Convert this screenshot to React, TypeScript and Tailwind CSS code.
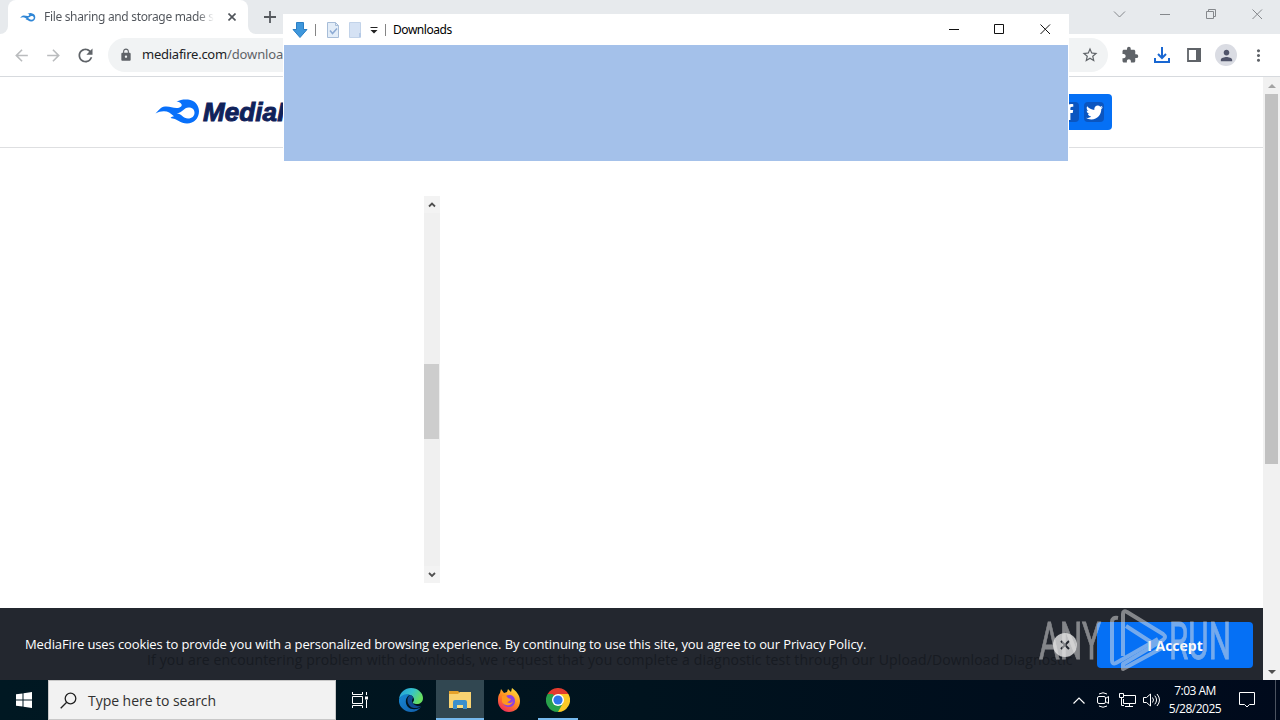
import type { ReactNode } from 'react'
import { FaTwitter, FaFacebookF } from 'react-icons/fa'
import {
  MdArrowBack,
  MdArrowForward,
  MdExtension,
  MdLock,
  MdPerson,
  MdRefresh,
  MdStarBorder,
  MdMoreVert,
} from 'react-icons/md'

function Flame({ className }: { className: string }) {
  return (
    <svg viewBox="0 0 46 26" className={className} fill="currentColor">
      <path
        fillRule="evenodd"
        d="M.5 14.500C4 11 5.500 8 10 7.500c5-.7 9 2.500 14 1.200 3-.8 3.500-3 1.500-4.700-1-.9-2.500-1.300-4-1.200C25 .6 29 .2 33 .5c6.500.6 11 5.500 11 11.800 0 7-5 12.200-12 12.200-6.500 0-10-5-16.500-5.500 1-1 2-1.400 3.500-1.700-3.500-3.300-6-5-10-5.100-3-.1-5.500.7-8.500 2.300zM21.500 14.500c4.500-.5 6.500 5 11.500 5 4 0 6.500-2.500 6.500-5.800S37 8.500 33.500 8.500c-4.500 0-6 5-12 6z"
      />
    </svg>
  )
}

function TabStrip() {
  return (
    <div className="flex h-[34px] bg-[#e7eaed]">
      <div className="flex w-2 bg-white">
        <div className="w-2 rounded-br-lg bg-[#e7eaed]" />
      </div>
      <div className="flex w-60 items-center rounded-t-lg bg-white pl-3">
        <Flame className="h-[13px] w-4 text-[#2f86d6]" />
        <div className="ml-2 w-[170px] overflow-hidden whitespace-nowrap bg-gradient-to-r from-[#50545a] from-90% to-white bg-clip-text text-[12px] leading-4 tracking-[-0.33px] text-transparent">
          File sharing and storage made simple
        </div>
        <svg viewBox="0 0 8 8" className="ml-[14px] size-2 text-[#50545a]" stroke="currentColor" strokeWidth="1.6">
          <path d="M.5.5l7 7M7.5.5l-7 7" />
        </svg>
      </div>
      <div className="flex w-2 bg-white">
        <div className="w-2 rounded-bl-lg bg-[#e7eaed]" />
      </div>
      <svg viewBox="0 0 12 12" className="mt-[11px] ml-2 size-3" stroke="#55595e" strokeWidth="1.8">
        <path d="M6 0v12M0 6h12" />
      </svg>
      <svg viewBox="0 0 160 20" className="mt-[4px] mr-[10px] ml-auto h-5 w-40" fill="none" stroke="#85888c">
        <path d="M4 7.500l5.500 5.500L15 7.500M50 10.500h10M96.500 7.500h7v7h-7zM98.500 7.500v-2h7v7h-2M142.500 5.500l9.500 9.500M152 5.500l-9.500 9.500" />
      </svg>
    </div>
  )
}

function Toolbar() {
  return (
    <div className="flex h-[43px] items-center border-b border-[#d7dade] bg-white text-[#5f6368]">
      <MdArrowBack className="ml-3 size-[19px] text-[#babcbe]" />
      <MdArrowForward className="ml-[13px] size-[19px] text-[#babcbe]" />
      <MdRefresh className="ml-[12px] size-[21px]" />
      <div className="ml-[12px] flex h-[34px] w-[1000px] items-center rounded-full bg-[#f1f3f4] pl-[11px]">
        <MdLock className="size-[14px]" />
        <div className="ml-[9px] text-[13px] tracking-[-0.100px]">
          <span className="tracking-[-0.250px] text-[#202124]">mediafire.com</span>/download_repair.php
        </div>
        <MdStarBorder className="mr-[9px] ml-auto size-[18px]" />
      </div>
      <MdExtension className="ml-[13px] size-[18px]" />
      <svg viewBox="0 0 16 16" className="ml-[15px] size-4" fill="none" stroke="#1967d2" strokeWidth="2">
        <path d="M8 0v11M4 7l4 4 4-4M1 11v4h14v-4" />
      </svg>
      <svg viewBox="0 0 14 14" className="ml-[17px] size-[14px]">
        <path d="M1 1h12v12H1z" fill="none" stroke="currentColor" strokeWidth="1.800" />
        <path d="M9 0h5v14H9z" fill="currentColor" />
      </svg>
      <div className="ml-[14px] flex size-[22px] items-center justify-center rounded-full bg-[#dadce3]">
        <MdPerson className="size-[17px] text-[#50546a]" />
      </div>
      <MdMoreVert className="ml-[12px] size-[19px]" />
    </div>
  )
}

function SiteHeader() {
  return (
    <header className="flex h-[71px] items-center border-b border-[#dedfe1] pr-[151px] pl-[155px]">
      <Flame className="h-[26px] w-[46px] text-[#0870fa]" />
      <div className="ml-[2px] font-['Liberation_Sans'] text-[26px] font-bold tracking-[0.100px] text-[#10225a] italic [-webkit-text-stroke:1px_#10225a]">
        MediaFire
      </div>
      <div className="ml-auto flex h-9 w-40 items-center justify-end gap-[5px] rounded bg-[#0570f5] pr-2 text-white">
        <div className="flex size-5 items-center justify-center rounded-sm bg-[#0a55c0]">
          <FaFacebookF className="size-4" />
        </div>
        <div className="flex size-5 items-center justify-center rounded-sm bg-[#0a55c0]">
          <FaTwitter className="size-[17px]" />
        </div>
      </div>
    </header>
  )
}

function CookieBar() {
  return (
    <div className="relative mt-auto flex h-[72px] items-center bg-[#23272f] pt-[2px] pr-[10px] pl-[25px] font-['Open_Sans']">
      <p className="absolute top-[43px] left-[147px] text-[14px] leading-[18px] tracking-[0.15px] whitespace-nowrap text-[#171b22]">
        If you are encountering problem with downloads, we request that you complete a diagnostic test through our Upload/Download Diagnostic
      </p>
      <p className="relative text-[13px] tracking-[-0.105px] whitespace-nowrap text-white">
        MediaFire uses cookies to provide you with a personalized browsing experience. By continuing to use this site, you agree to our Privacy Policy.
      </p>
      <button className="relative mr-5 ml-auto flex size-6 items-center justify-center rounded-full bg-[#bfc0c2]">
        <svg viewBox="0 0 10 10" className="size-[10px]" stroke="#23272f" strokeWidth="2">
          <path d="M1 1l8 8M9 1L1 9" />
        </svg>
      </button>
      <button className="relative h-[46px] w-[156px] rounded bg-[#0570f5] text-[14px] font-bold text-white">
        I Accept
      </button>
      <Watermark />
    </div>
  )
}

function Watermark() {
  return (
    <svg
      viewBox="0 0 194 62"
      className="absolute top-[2px] left-[1038px] h-[62px] w-[194px] overflow-visible font-['Liberation_Sans_Narrow','Roboto',sans-serif] opacity-50"
      fill="#e5e5e5"
    >
      <text x="1" y="49" fontSize="52" textLength="62" lengthAdjust="spacingAndGlyphs" stroke="#e5e5e5" strokeWidth=".8">ANY</text>
      <text x="131" y="49" fontSize="52" textLength="62" lengthAdjust="spacingAndGlyphs" stroke="#e5e5e5" strokeWidth=".8">RUN</text>
      <g fill="none" stroke="#e5e5e5" strokeWidth="4" strokeLinejoin="round">
        <path d="M80 8q-6-1-6 4v38q0 5 4 3l42-24M88 16l28 18" />
        <path d="M85 46V4q0-4 4-2l36 22q4 3 0 6L85 54v5l39-21" />
      </g>
    </svg>
  )
}

function PageScrollbar() {
  return (
    <div className="flex w-[17px] flex-col items-center bg-[#f1f1f1]">
      <div className="flex h-[17px] items-center">
        <div className="border-x-4 border-b-4 border-x-transparent border-b-[#a3a3a3]" />
      </div>
      <div className="h-[370px] w-[13px] bg-[#c1c1c1]" />
      <div className="mt-auto flex h-[17px] items-center">
        <div className="border-x-4 border-t-4 border-x-transparent border-t-[#505050]" />
      </div>
    </div>
  )
}

function DownloadsWindow() {
  return (
    <div className="absolute top-[14px] left-[283px] flex h-[594px] w-[786px] flex-col bg-white">
      <div className="flex h-[31px] items-center pl-[9px]">
        <svg viewBox="0 0 16 16" className="size-4">
          <path d="M4.500.5h7v7H15L8 15.500 1 7.500h3.500z" fill="#3e97dc" stroke="#2b7fc4" />
        </svg>
        <div className="ml-[7px] h-3 w-px bg-[#858585]" />
        <svg viewBox="0 0 14 16" className="ml-[10px] h-4 w-[14px]" fill="none">
          <path d="M1.500.500h8l3 3v12h-11z" fill="#e3edf8" stroke="#a7bdd8" />
          <path d="M9.500.500v3h3" stroke="#a7bdd8" />
          <path d="M4 8.500l2.500 3 4.500-5" stroke="#8dabd4" strokeWidth="1.500" />
        </svg>
        <svg viewBox="0 0 14 16" className="ml-[8px] h-4 w-[14px]">
          <path d="M1.500.500h11v15h-11z" fill="#d5e2f4" stroke="#c2d3e9" />
          <path d="M11 11h2v4h-2z" fill="#b4c9e6" />
        </svg>
        <svg viewBox="0 0 8 8" className="ml-[8px] size-2">
          <path d="M.5 1h7v1h-7zM.5 4h7L4 7.500z" fill="#222" />
        </svg>
        <div className="ml-[7px] h-3 w-px bg-[#858585]" />
        <div className="ml-[7px] text-[12px] tracking-[-0.450px] text-black">Downloads</div>
        <svg viewBox="0 0 102 12" className="mr-[18px] ml-auto h-3 w-[102px]" fill="none" stroke="#111">
          <path d="M0 5.500h10M45.500.5h9v9h-9zM91.500.5l9.500 9.500M101 .5L91.500 10" />
        </svg>
      </div>
      <div className="mx-px h-[116px] bg-[#a4c1ea]" />
      <div className="mt-[35px] ml-[141px] flex h-[387px] w-4 flex-col items-center bg-[#f0f0f0]">
        <ScrollArrow d="M1 5.500l3-3 3 3" />
        <div className="mt-[151px] h-[75px] w-[15px] self-start bg-[#cdcdcd]" />
        <div className="mt-auto">
          <ScrollArrow d="M1 2l3 3 3-3" />
        </div>
      </div>
    </div>
  )
}

function ScrollArrow({ d }: { d: string }) {
  return (
    <div className="flex h-[17px] w-4 items-center justify-center bg-[#f3f3f3] pr-px">
      <svg viewBox="0 0 8 7" className="h-[7px] w-2" fill="none" stroke="#505050" strokeWidth="1.800">
        <path d={d} />
      </svg>
    </div>
  )
}

function TaskButton({ children, active, running }: { children: ReactNode; active?: boolean; running?: boolean }) {
  return (
    <div className={`flex w-12 flex-col items-center ${active ? 'bg-[#314751]' : ''}`}>
      <div className="flex h-[38px] items-center pt-[2px]">{children}</div>
      {active && <div className="h-[2px] w-12 bg-[#76b9ed]" />}
      {running && <div className="h-[2px] w-10 bg-[#76b9ed]" />}
    </div>
  )
}

function EdgeIcon() {
  return (
    <svg viewBox="0 0 24 24" className="size-6">
      <defs>
        <linearGradient id="edgeTop" x1="0" x2="1" y1="0" y2=".4">
          <stop offset="0" stopColor="#229bd9" />
          <stop offset=".55" stopColor="#35c2cd" />
          <stop offset="1" stopColor="#67df60" />
        </linearGradient>
        <linearGradient id="edgeLow" x1="0" x2="1" y1="0" y2="1">
          <stop offset="0" stopColor="#1688d4" />
          <stop offset="1" stopColor="#125da9" />
        </linearGradient>
      </defs>
      <path d="M0 11C1 4 6 0 12 0c7 0 12 5 12 10 0 4-3 6-6 6-3 0-5-1-4-2 2-2 1-6-3-7C7 6 2 8 0 11z" fill="url(#edgeTop)" />
      <path d="M0 11c2-4 7-6 11-4-4 1-6 8-2 12 3 3 9 3 13 0-2 3-6 5-10 5C5 24-1 18 0 11z" fill="url(#edgeLow)" />
      <path d="M11 7c-4 3-3 9 1 12 3 2 8 1 10-1-7 1-11-4-8-8 0-1-1-3-3-3z" fill="#104b91" />
    </svg>
  )
}

function FolderIcon() {
  return (
    <svg viewBox="0 0 22 20" className="h-5 w-[22px]">
      <path d="M0 1h9l2 2h11v4H0z" fill="#e5a22b" />
      <path d="M0 4h9l2-2h11v16H0z" fill="#f9d371" />
      <path d="M4 19v-7q0-2 2-2h10q2 0 2 2v7h-4v-4H8v4z" fill="#3b8fcc" />
      <path d="M8 15h6v3H8z" fill="#f7dc83" />
    </svg>
  )
}

function FirefoxIcon() {
  return (
    <svg viewBox="0 0 24 24" className="size-6">
      <defs>
        <linearGradient id="fox" x1=".8" x2=".2" y1="0" y2="1">
          <stop offset="0" stopColor="#ffe33c" />
          <stop offset=".5" stopColor="#ff8a20" />
          <stop offset="1" stopColor="#ef2260" />
        </linearGradient>
      </defs>
      <path d="M3 5l1-4 3 4 3-1 1-3 3 3 1-4c4 3 8 7 8 13 0 7-5 11-11 11S1 19 1 13c0-3 0-6 2-8z" fill="url(#fox)" />
      <path d="M9 8c3-2 9-1 9 5 0 4-3 6-6 6s-6-2-6-5c3 1 5 0 7-2-3 0-4-2-4-4z" fill="#8e42df" />
      <path d="M5 8c3-1 5 0 6 2l3 1c-1 2-2 2-4 3 2 2 5 1 6-1-1 5-8 6-11 1z" fill="#ff981f" />
    </svg>
  )
}

function ChromeIcon() {
  return (
    <svg viewBox="0 0 24 24" className="size-6">
      <path d="M12 12L1.600 6A12 12 0 0 1 22.400 6z" fill="#e33b2e" />
      <path d="M12 12V6h10.400A12 12 0 0 1 12 24z" fill="#fcc926" />
      <path d="M12 12l5 3-5 9A12 12 0 0 1 1.600 6z" fill="#28a14b" />
      <path d="M12 12L6.500 14.500 1.600 6h5z" fill="#28a14b" />
      <circle cx="12" cy="12" r="6" fill="#fff" />
      <circle cx="12" cy="12" r="4.600" fill="#2d76e8" />
    </svg>
  )
}

function Taskbar() {
  return (
    <div className="flex h-10 bg-gradient-to-r from-[#001822] via-[#00131e] to-[#000a1c] font-['Open_Sans'] text-white">
      <div className="flex w-12 items-center justify-center">
        <svg viewBox="0 0 16 16" className="size-4" fill="#fff">
          <path d="M0 2.300L6.500 1.400v6.100H0zM7.500 1.200L16 0v7.500H7.500zM0 8.500h6.500v6.100L0 13.700zM7.500 8.500H16V16l-8.500-1.200z" />
        </svg>
      </div>
      <div className="flex w-72 items-center border border-[#c8c8c8] bg-[#f2f2f2] pl-[11px] text-[#303030]">
        <svg viewBox="0 0 17 17" className="size-[17px]" fill="none" stroke="#222" strokeWidth="1.300">
          <circle cx="10.500" cy="6.500" r="5.300" />
          <path d="M6.700 10.300L.7 16.300" />
        </svg>
        <span className="ml-[11px] text-[14px] tracking-[-0.040px]">Type here to search</span>
      </div>
      <TaskButton>
        <svg viewBox="0 0 16 16" className="size-4" fill="none" stroke="#fff">
          <path d="M.5 0v2.500h10V0M.5 4.500h10v7H.5zM.5 16v-2.500h10V16M14.500 0v3M14.500 8v8" />
          <path d="M13 4.500h3v3h-3z" fill="#fff" stroke="none" />
        </svg>
      </TaskButton>
      <div className="flex gap-px pl-[3px]">
        <TaskButton><EdgeIcon /></TaskButton>
        <TaskButton active><FolderIcon /></TaskButton>
        <TaskButton><FirefoxIcon /></TaskButton>
        <TaskButton running><ChromeIcon /></TaskButton>
      </div>
      <div className="ml-auto flex items-center">
        <svg viewBox="0 0 12 7" className="h-[7px] w-3" fill="none" stroke="#fff" strokeWidth="1.200">
          <path d="M.5 6.500L6 1l5.500 5.500" />
        </svg>
        <svg viewBox="0 0 12 16" className="ml-3 h-4 w-3" fill="none" stroke="#fff">
          <path d="M2 2Q6-.5 10 2M2 14q4 2.500 8 0M8.500 6.500l3-2v7l-3-2" />
          <rect x=".5" y="4.500" width="8" height="7" rx="1.500" />
        </svg>
        <svg viewBox="0 0 17 14" className="ml-[10px] h-[14px] w-[17px]" fill="none" stroke="#fff">
          <path d="M5 2.500h11.500v8H4.500V6M10.500 10.500v3M6 13.500h8M.5.500h4v4h-4zM2.500 4.500v8H5" />
        </svg>
        <svg viewBox="0 0 17 14" className="ml-[7px] h-[14px] w-[17px]" fill="none" stroke="#fff">
          <path d="M.5 4.500h3l4-3.500v12l-4-3.500h-3zM9.500 4.500q2 2.500 0 5M11.800 2.700q3.500 4.300 0 8.600M14 1q5 6 0 12" />
        </svg>
        <div className="ml-[8px] w-[54px] text-center text-[12px] leading-[18px] tracking-[-0.500px] whitespace-nowrap">
          <div>7:03 AM</div>
          <div>5/28/2025</div>
        </div>
        <svg viewBox="0 0 16 16" className="mr-5 ml-[17px] size-4" fill="none" stroke="#fff">
          <path d="M.5.500h15v12h-5L8 15l-2.500-2.500h-5z" />
        </svg>
        <div className="mr-1 h-10 w-px bg-[#4b5360]" />
      </div>
    </div>
  )
}

export default function App() {
  return (
    <main className="relative flex h-[720px] w-[1280px] flex-col overflow-hidden bg-white font-['Noto_Sans']">
      <TabStrip />
      <Toolbar />
      <div className="flex grow">
        <div className="flex w-[1263px] flex-col">
          <SiteHeader />
          <CookieBar />
        </div>
        <PageScrollbar />
      </div>
      <Taskbar />
      <DownloadsWindow />
    </main>
  )
}
